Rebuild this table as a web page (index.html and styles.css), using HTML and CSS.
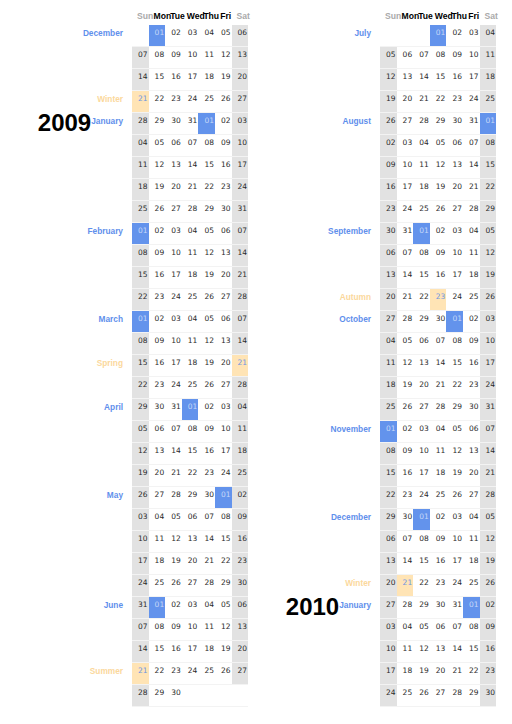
FILE: index.html
```html
<!DOCTYPE html>
<html>
    <head>
        <link rel="stylesheet" href="styles.css">
    </head>

    <body>
        <div class="page">
            <div class="cal" id="cal_left"></div>
            <div class="cal" id="cal_right"></div>
        </div>

        <script>
            var MONTHS = ["January", "February", "March", "April", "May", "June",
                "July", "August", "September", "October", "November", "December"];
            var DAYS = ["Sun", "Mon", "Tue", "Wed", "Thu", "Fri", "Sat"];

            // Season start dates, keyed by year-month-day (month is 0 based)
            var SEASONS = {
                "2008-11-21": "Winter",
                "2009-2-21": "Spring",
                "2009-5-21": "Summer",
                "2009-8-23": "Autumn",
                "2009-11-21": "Winter"
            };

            function pad(n) {
                return (n < 10 ? "0" : "") + n;
            }

            function key(d) {
                return d.getFullYear() + "-" + d.getMonth() + "-" + d.getDate();
            }

            function addCell(parent, cls, text) {
                var div = document.createElement("div");
                div.className = cls;
                if (text) {
                    div.textContent = text;
                }
                parent.appendChild(div);
                return div;
            }

            // Builds a week-by-week calendar from first to last (inclusive)
            function buildCalendar(id, first, last) {
                var el = document.getElementById(id);

                // Header row
                addCell(el, "label", "");
                for (var i = 0; i < 7; i++) {
                    addCell(el, "head" + ((i == 0 || i == 6) ? " weekend" : ""), DAYS[i]);
                }

                var day = new Date(first.getFullYear(), first.getMonth(), first.getDate() - first.getDay());

                while (day <= last) {
                    var label = addCell(el, "label", "");

                    for (var d = 0; d < 7; d++) {
                        var inRange = day >= first && day <= last;
                        var cls = "day";

                        if (inRange) {
                            if (d == 0 || d == 6) cls += " weekend";

                            if (day.getDate() == 1) {
                                cls += " first";
                                if (day.getMonth() == 0) {
                                    addCell(label, "year", "" + day.getFullYear());
                                }
                                addCell(label, "month", MONTHS[day.getMonth()]);
                            } else if (SEASONS[key(day)]) {
                                cls += " season";
                                addCell(label, "season_name", SEASONS[key(day)]);
                            }
                        }

                        addCell(el, cls, inRange ? pad(day.getDate()) : "");
                        day.setDate(day.getDate() + 1);
                    }
                }
            }

            buildCalendar("cal_left", new Date(2008, 11, 1), new Date(2009, 5, 30));
            buildCalendar("cal_right", new Date(2009, 6, 1), new Date(2010, 0, 30));
        </script>
    </body>
</html>
```

FILE: styles.css
```css
html {
    font-family: "Liberation Sans", Arial, sans-serif;
}

body {
    margin: 8px;
    background: #fff;
}

.page {
    display: flex;
}

.cal {
    display: grid;
    grid-template-columns: 124px repeat(7, 16.6px);
    grid-template-rows: 17px;
    grid-auto-rows: 22px;
    width: 248px;
}

.head {
    font-size: 8.6px;
    font-weight: bold;
    line-height: 17px;
    text-align: center;
    padding-left: 5px;
    white-space: nowrap;
    color: #000;
}

.head.weekend {
    color: #aaa;
}

.label {
    display: flex;
    justify-content: flex-end;
    align-items: flex-start;
    padding-right: 9px;
    font-size: 8.3px;
    font-weight: bold;
    white-space: nowrap;
}

.month {
    line-height: 16px;
    color: #5f8fec;
}

.season_name {
    line-height: 16px;
    color: #fbd89c;
}

.year {
    font-size: 24px;
    line-height: 20px;
    color: #000;
}

.day {
    box-sizing: border-box;
    font-family: "DejaVu Sans", Verdana, sans-serif;
    font-size: 7.5px;
    line-height: 16px;
    color: #2a2a2a;
    text-align: center;
    padding-left: 5px;
    border-bottom: 1px solid #f3f3f3;
}

.day.weekend {
    background: #e2e2e2;
}

.day.first {
    background: #6393ec;
    color: #c6d8f8;
}

.day.season {
    background: #ffe4b5;
    color: #6f95e0;
}
```
